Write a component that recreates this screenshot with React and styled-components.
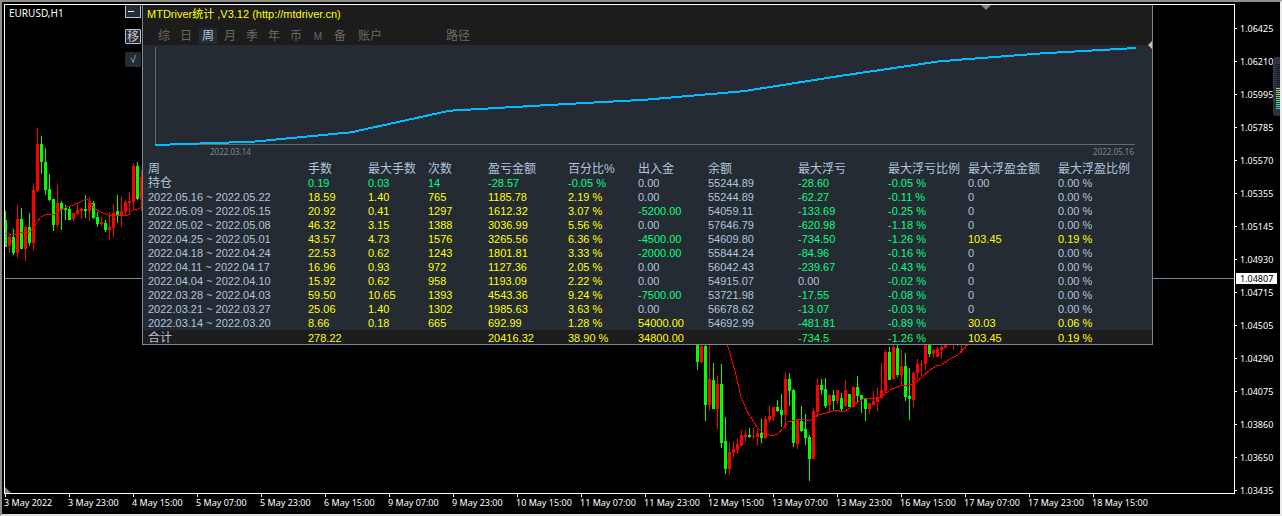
import React, { useState } from "react";
import styled, { createGlobalStyle } from "styled-components";

const STEEL = "#b0c4de";
const SLATE = "#778899";
const YELLOW = "#ffff00";
const GREEN = "#00ff7f";
const PANEL = "#252b32";
const DARK = "#1c1c1c";

const GlobalStyle = createGlobalStyle`
  * {
    box-sizing: border-box;
  }
  body {
    margin: 0;
    background: #000;
    color: #fff;
    font-family: "Liberation Sans", "Noto Sans CJK SC", sans-serif;
    font-size: 11px;
  }
`;

const Terminal = styled.main`
  position: relative;
  display: grid;
  grid-template-columns: minmax(0, 1fr) 45px;
  grid-template-rows: 1fr 20px;
  min-height: 100vh;
  padding: 2px 0 0 2px;
  border: 2px solid #8e8e8a;
  border-right-color: #ececec;
  border-bottom-color: #e2e2e2;
  background: #000;
  overflow: hidden;
`;

const Plot = styled.section`
  position: relative;
  display: flex;
  align-items: flex-start;
  border: 1px solid #fff;
  padding-right: 81px;
  min-width: 0;
`;

const Candles = styled.svg`
  position: absolute;
  inset: 0;
  width: 100%;
  height: 100%;
`;

const Markers = styled(Candles)`
  pointer-events: none;
`;

const Side = styled.div`
  position: relative;
  display: flex;
  flex-direction: column;
  align-items: flex-end;
  flex: none;
  width: 137px;
  padding-right: 1px;
`;

const Symbol = styled.h1`
  position: absolute;
  left: 4px;
  top: 1px;
  margin: 0;
  font: 400 10px/14px "Noto Sans", sans-serif;
`;

const SideButton = styled.button`
  width: 16px;
  height: ${(props) => (props.$short ? "13px" : "15px")};
  margin-bottom: ${(props) => (props.$short ? "11px" : "8px")};
  padding: 0;
  border: 1px solid ${(props) => (props.$flat ? PANEL : STEEL)};
  ${(props) => props.$short && `border-top-color: ${PANEL};`}
  border-radius: 1px;
  background: ${PANEL};
  color: ${(props) => (props.$flat ? STEEL : "#c8c8c8")};
  font-family: inherit;
  font-size: ${(props) => (props.$flat ? "10px" : "12px")};
  line-height: 12px;
  cursor: pointer;
  overflow: hidden;
`;

const Dash = styled.span`
  display: block;
  width: 6px;
  height: 1px;
  margin: -1px 0 0 2px;
  background: #fff;
`;

const Panel = styled.section`
  position: relative;
  flex: 1;
  min-width: 0;
  border: 1px solid ${SLATE};
  border-top: 0;
  background: ${PANEL};
`;

const PanelHeader = styled.header`
  display: flex;
  flex-direction: column;
  justify-content: space-between;
  height: 40px;
  padding-bottom: 1px;
  background: ${DARK};
`;

const Title = styled.h2`
  margin: 0;
  padding: 1px 0 0 4px;
  color: ${YELLOW};
  font-size: 11px;
  font-weight: 400;
  line-height: 16px;
  a {
    color: inherit;
    text-decoration: none;
  }
`;

const Tabs = styled.nav`
  display: flex;
  gap: 4px;
  padding-left: 12px;
`;

const Tab = styled.button`
  width: ${(props) => (props.$wide ? "34px" : "18px")};
  height: 16px;
  margin-left: ${(props) => (props.$apart ? "50px" : "0")};
  padding: 1px 0 0;
  border: 0;
  border-radius: 2px;
  background: ${(props) => (props.$active ? PANEL : "transparent")};
  color: ${(props) => (props.$active ? STEEL : "#696969")};
  font-family: inherit;
  font-size: ${(props) => (props.$small ? "10px" : "12px")};
  line-height: 15px;
  white-space: nowrap;
  cursor: pointer;
`;

const Growth = styled.figure`
  margin: 0;
  padding: 0 16px 5px 12px;
`;

const Curve = styled.svg`
  display: block;
  width: 100%;
  height: 101px;
  overflow: visible;
`;

const Dates = styled.figcaption`
  display: flex;
  justify-content: space-between;
  padding: 0 2px 0 55px;
  color: ${SLATE};
  font: 400 8px/11px "Noto Sans", sans-serif;
`;

const Table = styled.table`
  width: 100%;
  table-layout: fixed;
  border-collapse: collapse;
`;

const Col = styled.col`
  width: ${(props) => props.$width};
`;

const Head = styled.th`
  height: 14px;
  padding: 1px 0 0;
  color: ${STEEL};
  font-size: 12px;
  font-weight: 400;
  line-height: 13px;
  text-align: left;
  white-space: nowrap;
  &:first-child {
    padding-left: 5px;
  }
`;

const Cell = styled.td`
  height: 14px;
  padding: 0;
  color: ${(props) => props.$color};
  line-height: 14px;
  white-space: nowrap;
  &:first-child {
    padding-left: 5px;
    font-size: ${(props) => (props.$label ? "12px" : "11px")};
  }
`;

const Total = styled.tr`
  background: ${DARK};
  td {
    padding-top: 2px;
    line-height: 12px;
  }
`;

const PriceAxis = styled.ol`
  position: relative;
  margin: 0 0 -13px;
  padding: 8px 0 0;
  list-style: none;
  font: 400 9px/33px "Noto Sans", sans-serif;
`;

const Price = styled.li`
  display: flex;
  align-items: center;
  height: 33px;
  &::before {
    content: "";
    width: 2px;
    height: 1px;
    margin-right: 3px;
    background: #fff;
  }
`;

const Bid = styled.li`
  position: absolute;
  left: 1px;
  top: 269px;
  width: 41px;
  height: 11px;
  padding-left: 4px;
  background: #fff;
  color: #000;
  line-height: 11px;
`;

const TimeAxis = styled.ol`
  grid-column: 1 / -1;
  display: flex;
  margin: 0;
  padding: 0;
  list-style: none;
  font: 400 9px/12px "Noto Sans", sans-serif;
  white-space: nowrap;
`;

const Time = styled.li`
  flex: none;
  width: 64px;
  &::before {
    content: "";
    display: block;
    width: 1px;
    height: 3px;
    margin-left: 1px;
    background: #fff;
  }
`;

const Meter = styled.div`
  position: absolute;
  right: -2px;
  top: 55px;
  display: flex;
  flex-direction: column;
  gap: 1px;
  width: 9px;
  height: 59px;
  padding: 7px 2px 0 3px;
  border-radius: 3px 0 0 3px;
  background: #2d3142;
`;

const Led = styled.i`
  flex: none;
  height: 1px;
  background: ${(props) => props.$color};
`;

// center x, high, low, body top, body bottom, direction
const candles = [
  [5, 211, 247, 220, 247, "g"],
  [9, 234, 253, 237, 246, "r"],
  [13, 229, 255, 237, 253, "g"],
  [17, 205, 258, 219, 253, "r"],
  [21, 208, 249, 219, 249, "g"],
  [25, 225, 261, 227, 249, "r"],
  [29, 213, 246, 227, 243, "g"],
  [33, 183, 251, 190, 243, "r"],
  [37, 128, 192, 144, 191, "r"],
  [41, 136, 174, 144, 162, "g"],
  [45, 148, 195, 162, 190, "g"],
  [49, 174, 201, 189, 200, "g"],
  [53, 199, 231, 199, 225, "g"],
  [57, 185, 227, 203, 225, "r"],
  [61, 201, 230, 203, 210, "g"],
  [65, 205, 220, 208, 210, "g"],
  [69, 207, 220, 209, 220, "g"],
  [73, 213, 222, 213, 219, "r"],
  [77, 204, 215, 210, 214, "r"],
  [81, 208, 219, 209, 211, "r"],
  [85, 195, 218, 209, 211, "g"],
  [89, 197, 221, 203, 211, "r"],
  [93, 201, 219, 203, 218, "g"],
  [97, 212, 227, 217, 224, "g"],
  [101, 217, 226, 222, 224, "r"],
  [105, 220, 232, 223, 230, "g"],
  [109, 212, 240, 227, 230, "r"],
  [113, 204, 237, 213, 228, "r"],
  [117, 195, 223, 211, 215, "g"],
  [121, 196, 227, 211, 216, "r"],
  [125, 200, 215, 202, 212, "r"],
  [129, 192, 215, 201, 203, "r"],
  [133, 163, 210, 166, 202, "r"],
  [137, 162, 200, 166, 199, "g"],
  [141, 170, 211, 177, 200, "r"],
  [697, 340, 370, 340, 362, "g"],
  [701, 340, 363, 346, 362, "r"],
  [705, 340, 421, 346, 405, "g"],
  [709, 340, 411, 379, 405, "r"],
  [713, 363, 409, 380, 409, "g"],
  [717, 376, 429, 384, 409, "r"],
  [721, 364, 448, 384, 443, "g"],
  [725, 417, 474, 441, 469, "g"],
  [729, 442, 475, 452, 469, "r"],
  [733, 441, 458, 449, 453, "r"],
  [737, 438, 454, 444, 450, "r"],
  [741, 430, 446, 435, 446, "r"],
  [745, 430, 442, 435, 437, "r"],
  [749, 428, 438, 435, 437, "g"],
  [753, 428, 439, 436, 437, "r"],
  [757, 429, 445, 433, 437, "r"],
  [761, 419, 443, 433, 438, "g"],
  [765, 416, 439, 419, 438, "r"],
  [769, 406, 423, 416, 420, "r"],
  [773, 407, 421, 407, 417, "r"],
  [777, 400, 412, 407, 411, "g"],
  [781, 394, 427, 410, 415, "g"],
  [785, 372, 429, 379, 415, "r"],
  [789, 373, 406, 379, 391, "g"],
  [793, 389, 447, 390, 443, "g"],
  [797, 419, 449, 419, 444, "r"],
  [801, 406, 432, 421, 431, "g"],
  [805, 414, 445, 429, 438, "g"],
  [809, 435, 481, 437, 459, "g"],
  [813, 408, 459, 411, 459, "r"],
  [817, 378, 417, 385, 412, "r"],
  [821, 379, 395, 385, 390, "g"],
  [825, 378, 408, 389, 406, "g"],
  [829, 394, 412, 395, 405, "r"],
  [833, 390, 410, 395, 401, "g"],
  [837, 390, 404, 390, 401, "r"],
  [841, 393, 411, 398, 409, "g"],
  [845, 380, 407, 390, 406, "r"],
  [849, 394, 407, 394, 407, "g"],
  [853, 386, 407, 387, 407, "r"],
  [857, 376, 403, 387, 396, "g"],
  [861, 395, 413, 395, 400, "g"],
  [865, 399, 421, 399, 409, "g"],
  [869, 403, 414, 403, 409, "r"],
  [873, 391, 405, 401, 405, "r"],
  [877, 388, 411, 397, 402, "r"],
  [881, 363, 399, 390, 398, "r"],
  [885, 350, 394, 352, 391, "r"],
  [889, 347, 380, 352, 380, "g"],
  [893, 345, 380, 347, 379, "r"],
  [897, 345, 377, 348, 375, "g"],
  [901, 349, 386, 366, 375, "r"],
  [905, 353, 401, 366, 397, "g"],
  [909, 368, 420, 396, 399, "g"],
  [913, 372, 407, 373, 400, "r"],
  [917, 359, 379, 364, 373, "r"],
  [921, 360, 376, 364, 365, "r"],
  [925, 340, 370, 340, 364, "r"],
  [929, 340, 357, 340, 354, "g"],
  [933, 349, 358, 350, 354, "r"],
  [937, 347, 357, 349, 357, "r"],
  [941, 345, 359, 347, 350, "r"],
  [945, 340, 348, 340, 348, "r"],
  [953, 340, 350, 340, 342, "r"],
  [957, 340, 346, 340, 342, "g"],
  [961, 340, 353, 340, 342, "r"],
  [965, 340, 349, 340, 342, "r"],
];

const averages = [
  "5,233 13,235 20,233 29,232 33,229 37,222 41,217 45,215 55,214 62,209 70,206 78,203 86,199 90,201 94,208 100,212 108,215 118,216 128,215 133,210 138,209 142,207",
  "726,340 735,371 741,397 747,411 757,427 763,433 772,436 778,434 788,422 796,420 804,419 810,421 818,415 830,412 836,410 843,412 850,408 858,402 865,398 872,399 881,397 890,390 900,386 908,385 914,384 922,377 930,370 936,366 941,365 950,359 958,355 966,346 969,344",
];

const tabs = ["综", "日", "周", "月", "季", "年", "币", "M", "备", "账户", "路径"];

const widths = [165, 60, 60, 60, 80, 70, 70, 90, 90, 80, 90, 94];

const columns = [
  "周",
  "手数",
  "最大手数",
  "次数",
  "盈亏金额",
  "百分比%",
  "出入金",
  "余额",
  "最大浮亏",
  "最大浮亏比例",
  "最大浮盈金额",
  "最大浮盈比例",
];

const rows = [
  ["持仓", "0.19", "0.03", "14", "-28.57", "-0.05 %", "0.00", "55244.89", "-28.60", "-0.05 %", "0.00", "0.00 %"],
  ["2022.05.16 ~ 2022.05.22", "18.59", "1.40", "765", "1185.78", "2.19 %", "0.00", "55244.89", "-62.27", "-0.11 %", "0", "0.00 %"],
  ["2022.05.09 ~ 2022.05.15", "20.92", "0.41", "1297", "1612.32", "3.07 %", "-5200.00", "54059.11", "-133.69", "-0.25 %", "0", "0.00 %"],
  ["2022.05.02 ~ 2022.05.08", "46.32", "3.15", "1388", "3036.99", "5.56 %", "0.00", "57646.79", "-620.98", "-1.18 %", "0", "0.00 %"],
  ["2022.04.25 ~ 2022.05.01", "43.57", "4.73", "1576", "3265.56", "6.36 %", "-4500.00", "54609.80", "-734.50", "-1.26 %", "103.45", "0.19 %"],
  ["2022.04.18 ~ 2022.04.24", "22.53", "0.62", "1243", "1801.81", "3.33 %", "-2000.00", "55844.24", "-84.96", "-0.16 %", "0", "0.00 %"],
  ["2022.04.11 ~ 2022.04.17", "16.96", "0.93", "972", "1127.36", "2.05 %", "0.00", "56042.43", "-239.67", "-0.43 %", "0", "0.00 %"],
  ["2022.04.04 ~ 2022.04.10", "15.92", "0.62", "958", "1193.09", "2.22 %", "0.00", "54915.07", "0.00", "-0.02 %", "0", "0.00 %"],
  ["2022.03.28 ~ 2022.04.03", "59.50", "10.65", "1393", "4543.36", "9.24 %", "-7500.00", "53721.98", "-17.55", "-0.08 %", "0", "0.00 %"],
  ["2022.03.21 ~ 2022.03.27", "25.06", "1.40", "1302", "1985.63", "3.63 %", "0.00", "56678.62", "-13.07", "-0.03 %", "0", "0.00 %"],
  ["2022.03.14 ~ 2022.03.20", "8.66", "0.18", "665", "692.99", "1.28 %", "54000.00", "54692.99", "-481.81", "-0.89 %", "30.03", "0.06 %"],
];

const total = ["合计", "278.22", "", "", "20416.32", "38.90 %", "34800.00", "", "-734.5", "-1.26 %", "103.45", "0.19 %"];

const prices = [
  "1.06425", "1.06210", "1.05995", "1.05785", "1.05570", "1.05355", "1.05145", "1.04930",
  "1.04715", "1.04505", "1.04290", "1.04075", "1.03860", "1.03650", "1.03435",
];

const times = [
  "3 May 2022", "3 May 23:00", "4 May 15:00", "5 May 07:00", "5 May 23:00", "6 May 15:00",
  "9 May 07:00", "9 May 23:00", "10 May 15:00", "11 May 07:00", "11 May 23:00", "12 May 15:00",
  "13 May 07:00", "13 May 23:00", "16 May 15:00", "17 May 07:00", "17 May 23:00", "18 May 15:00",
];

const leds = [
  ...Array(12).fill("#181b26"),
  "#b5c94a", "#a8cf50", "#98d25a", "#8ad264", "#7cd36e", "#6cd57a",
  "#5fd586", "#55d592", "#4cd3a0", "#46d0aa", "#40ccb4",
];

const cellColor = (value, index, open) => {
  if (index === 0 || index === 7 || parseFloat(value) === 0) return STEEL;
  if (open || value.startsWith("-")) return GREEN;
  return YELLOW;
};

// running profit, oldest week first
const curvePoints = () => {
  const weeks = rows.slice(1).reverse().map((row) => parseFloat(row[4]));
  const sum = weeks.reduce((a, b) => a + b, 0);
  let running = 0;
  const points = [[0, 100]];
  weeks.forEach((profit, i) => {
    running += profit;
    points.push([((i + 1) * 981) / weeks.length, 100 - (running / sum) * 97]);
  });
  return points.map((p) => p.join(",")).join(" ");
};

const PriceChart = () => (
  <Candles aria-hidden="true" shapeRendering="crispEdges">
    <g transform="translate(-5 -5)">
      <rect x="5" y="278" width="100%" height="1" fill={SLATE} />
      {candles.map(([x, high, low, top, bottom, dir]) => (
        <g key={x} fill={dir === "g" ? "#00ff00" : "#ff0000"}>
          <rect x={x} y={high} width="1" height={low - high} />
          <rect x={x - 1} y={top} width="3" height={bottom - top} />
        </g>
      ))}
      {averages.map((points) => (
        <polyline key={points} points={points} fill="none" stroke="#ff0000" />
      ))}
    </g>
  </Candles>
);

const Statistics = () => {
  const [active, setActive] = useState("周");

  return (
    <Panel>
      <PanelHeader>
        <Title>
          MTDriver统计 ,V3.12 (<a href="http://mtdriver.cn">http://mtdriver.cn</a>)
        </Title>
        <Tabs>
          {tabs.map((tab) => (
            <Tab
              key={tab}
              $active={tab === active}
              $wide={tab.length > 1}
              $apart={tab === "路径"}
              $small={tab === "M"}
              onClick={() => setActive(tab)}
            >
              {tab}
            </Tab>
          ))}
        </Tabs>
      </PanelHeader>
      <Growth>
        <Curve viewBox="0 0 981 101" preserveAspectRatio="none" shapeRendering="crispEdges">
          <path d="M0.5 2V99.5H980" fill="none" stroke="#696969" />
          <polyline points={curvePoints()} fill="none" stroke="#00bfff" strokeWidth="2" />
        </Curve>
        <Dates>
          <span>2022.03.14</span>
          <span>2022.05.16</span>
        </Dates>
      </Growth>
      <Table>
        <colgroup>
          {widths.map((width, i) => (
            <Col key={i} $width={`${(width / 1009) * 100}%`} />
          ))}
        </colgroup>
        <thead>
          <tr>
            {columns.map((name) => (
              <Head key={name} scope="col">
                {name}
              </Head>
            ))}
          </tr>
        </thead>
        <tbody>
          {rows.map((row, r) => (
            <tr key={row[0]}>
              {row.map((value, i) => (
                <Cell key={i} $label={r === 0} $color={cellColor(value, i, r === 0)}>
                  {value}
                </Cell>
              ))}
            </tr>
          ))}
        </tbody>
        <tfoot>
          <Total>
            {total.map((value, i) => (
              <Cell key={i} $label $color={cellColor(value, i)}>
                {value}
              </Cell>
            ))}
          </Total>
        </tfoot>
      </Table>
    </Panel>
  );
};

export default function App() {
  const [open, setOpen] = useState(true);

  return (
    <>
      <GlobalStyle />
      <Terminal>
        <Plot>
          <PriceChart />
          <Side>
            <Symbol>EURUSD,H1</Symbol>
            <SideButton $short aria-label="最小化" onClick={() => setOpen(!open)}>
              <Dash />
            </SideButton>
            <SideButton>移</SideButton>
            <SideButton $flat>√</SideButton>
          </Side>
          {open && <Statistics />}
          <Markers aria-hidden="true">
            <path d="M976 0h10l-5 5z" fill={SLATE} />
            <path d="M1147 36l-4 4 4 4z" fill="#c0c0c0" />
            <svg y="100%" overflow="visible">
              <path d="M0 0v-6l6 6z" fill={SLATE} />
            </svg>
          </Markers>
        </Plot>
        <PriceAxis>
          {prices.map((price) => (
            <Price key={price}>{price}</Price>
          ))}
          <Bid>1.04807</Bid>
        </PriceAxis>
        <TimeAxis>
          {times.map((time) => (
            <Time key={time}>{time}</Time>
          ))}
        </TimeAxis>
        <Meter>
          {leds.map((color, i) => (
            <Led key={i} $color={color} />
          ))}
        </Meter>
      </Terminal>
    </>
  );
}
